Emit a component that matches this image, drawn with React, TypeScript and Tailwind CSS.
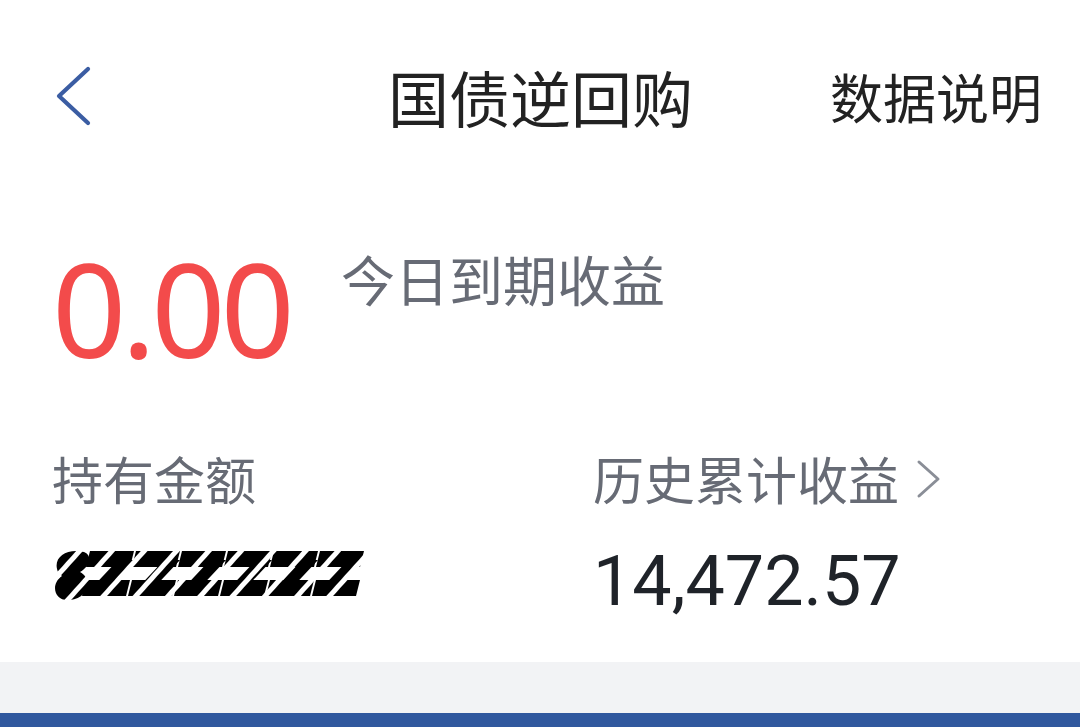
const cjk = "font-['Noto_Sans_CJK_SC','Noto_Sans',sans-serif]"

function Redacted() {
  // scribbled-out holding amount
  const cells = [0, 1, 2, 3, 4, 5]
  return (
    <svg width="312" height="64" viewBox="0 0 312 64">
      <defs>
        <pattern id="stripes" width="24" height="24" patternUnits="userSpaceOnUse" patternTransform="rotate(42)">
          <rect x="0" y="0" width="5" height="24" fill="#fff" />
        </pattern>
      </defs>
      <path d="M6 30 C0 16 14 6 32 10 C42 14 36 26 28 30 C40 36 38 56 18 58 C2 60 -2 42 10 34 Z" fill="#000" />
      {cells.map((i) => {
        const x = 38 + i * 46
        return (
          <g key={i} fill="#000">
            <polygon points={`${x},9 ${x + 44},9 ${x + 40},25 ${x - 4},25`} />
            <polygon points={`${x + 28},18 ${x + 44},18 ${x + 14},50 ${x - 2},50`} />
            <polygon points={`${x - 4},38 ${x + 40},38 ${x + 36},54 ${x - 8},54`} />
          </g>
        )
      })}
      <rect x="0" y="0" width="312" height="64" fill="url(#stripes)" />
    </svg>
  )
}

export default function App() {
  return (
    <div className={`flex h-[727px] w-[1080px] flex-col bg-white ${cjk}`}>
      <div className="flex h-[192px] items-center pl-[56px] pr-[38px]">
        <svg width="36" height="60" viewBox="0 0 36 60" className="text-[#3b5da3]">
          <polyline points="32,3 3,30 32,57" fill="none" stroke="currentColor" strokeWidth="4.2" strokeLinecap="round" strokeLinejoin="round" />
        </svg>
        <h1 className="ml-[296px] text-[61px] font-normal leading-none text-[#222]">国债逆回购</h1>
        <span className="ml-auto text-[53px] leading-none text-[#222]">数据说明</span>
      </div>

      <div className="flex items-start pl-[52px]">
        <span className="mt-[51px] font-['Noto_Sans',sans-serif] text-[130px] leading-none tracking-[-5px] text-[#f34b4b]">
          0.00
        </span>
        <span className="ml-[51px] mt-[60px] text-[54px] leading-none text-[#676b75]">今日到期收益</span>
      </div>

      <div className="mt-[80px] flex pl-[52px]">
        <div className="flex w-[541px] flex-col gap-[38px]">
          <span className="text-[51px] leading-none text-[#676b75]">持有金额</span>
          <Redacted />
        </div>
        <div className="flex flex-col gap-[42px]">
          <div className="flex items-center">
            <span className="text-[51px] leading-none text-[#676b75]">历史累计收益</span>
            <svg width="28" height="40" viewBox="0 0 28 40" className="ml-[16px] text-[#8a8e97]">
              <polyline points="4,3 23,20 4,37" fill="none" stroke="currentColor" strokeWidth="3" strokeLinecap="round" strokeLinejoin="round" />
            </svg>
          </div>
          <span className="font-['Roboto',sans-serif] text-[70px] leading-none text-[#1f2329]">
            14,472.57
          </span>
        </div>
      </div>

      <div className="mt-auto h-[51px] bg-[#f2f3f5]" />
      <div className="h-[14px] bg-[#30589e]" />
    </div>
  )
}
